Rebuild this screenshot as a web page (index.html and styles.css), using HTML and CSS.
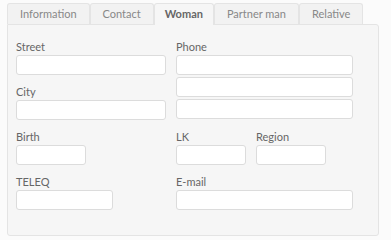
FILE: index.html
```html
<!DOCTYPE html>
<html lang="en">
<head>
    <meta charset="UTF-8">
    <title>Person details</title>
    <link rel="stylesheet" href="styles.css">
</head>
<body>
    <div class="tabs">
        <div class="tab">Information</div>
        <div class="tab">Contact</div>
        <div class="tab active">Woman</div>
        <div class="tab">Partner man</div>
        <div class="tab">Relative</div>
    </div>

    <div class="panel">
        <div class="row">
            <div class="col-left">
                <div class="field">
                    <label>Street</label>
                    <input type="text" class="w-long">
                </div>
                <div class="field">
                    <label>City</label>
                    <input type="text" class="w-long">
                </div>
            </div>
            <div class="field">
                <label>Phone</label>
                <div class="stack">
                    <input type="text" class="w-wide">
                    <input type="text" class="w-wide">
                    <input type="text" class="w-wide">
                </div>
            </div>
        </div>

        <div class="row">
            <div class="col-left">
                <div class="field">
                    <label>Birth</label>
                    <input type="text" class="w-short">
                </div>
            </div>
            <div class="pair">
                <div class="field">
                    <label>LK</label>
                    <input type="text" class="w-short">
                </div>
                <div class="field">
                    <label>Region</label>
                    <input type="text" class="w-short">
                </div>
            </div>
        </div>

        <div class="row">
            <div class="col-left">
                <div class="field">
                    <label>TELEQ</label>
                    <input type="text" class="w-mid">
                </div>
            </div>
            <div class="field">
                <label>E-mail</label>
                <input type="text" class="w-wide">
            </div>
        </div>
    </div>
</body>
</html>
```

FILE: styles.css
```css
* {
    margin: 0;
    padding: 0;
    box-sizing: border-box;
}

body {
    font-family: "Lato", "Open Sans", sans-serif;
    font-size: 11px;
    color: #666;
    background: #fbfbfb;
    padding: 3px 12px 0 7px;
}

.tabs {
    display: flex;
    height: 21px;
}

.tab {
    flex-shrink: 0;
    white-space: nowrap;
    height: 21px;
    line-height: 20px;
    padding: 0 12px;
    border: 1px solid #e4e4e4;
    border-bottom: none;
    border-radius: 3px 3px 0 0;
    background: #f2f2f2;
    color: #888;
}

.tab.active {
    background: #f6f6f6;
    font-weight: 700;
    color: #666;
    padding: 0 10px;
    height: 22px;
    margin-bottom: -1px;
    position: relative;
}

.panel {
    background: #f6f6f6;
    border: 1px solid #e4e4e4;
    border-radius: 0 3px 3px 3px;
    padding: 15px 8px 25px 8px;
}

.row {
    display: flex;
    gap: 10px;
    margin-bottom: 10px;
}

.row:last-child {
    margin-bottom: 0;
}

.col-left {
    width: 150px;
    display: flex;
    flex-direction: column;
    gap: 10px;
}

.pair {
    display: flex;
    gap: 10px;
}

.field label {
    display: block;
    height: 14px;
    line-height: 14px;
    margin-bottom: 1px;
    color: #666;
}

.stack {
    display: flex;
    flex-direction: column;
    gap: 2px;
}

input {
    display: block;
    height: 20px;
    background: #fff;
    border: 1px solid #dcdcdc;
    border-radius: 3px;
    outline: none;
}

.w-long { width: 150px; }
.w-wide { width: 177px; }
.w-short { width: 70px; }
.w-mid { width: 97px; }
```
